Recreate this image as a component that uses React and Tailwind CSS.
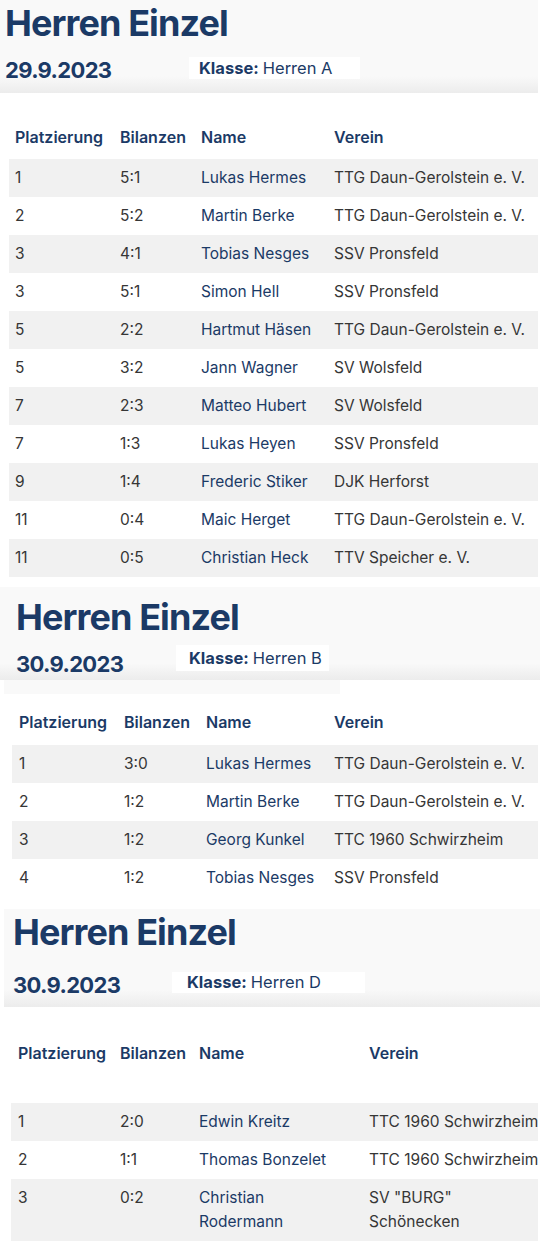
const NAVY = "text-[#1b3a66]";

const tableA = [
  ["1", "5:1", "Lukas Hermes", "TTG Daun-Gerolstein e. V."],
  ["2", "5:2", "Martin Berke", "TTG Daun-Gerolstein e. V."],
  ["3", "4:1", "Tobias Nesges", "SSV Pronsfeld"],
  ["3", "5:1", "Simon Hell", "SSV Pronsfeld"],
  ["5", "2:2", "Hartmut Häsen", "TTG Daun-Gerolstein e. V."],
  ["5", "3:2", "Jann Wagner", "SV Wolsfeld"],
  ["7", "2:3", "Matteo Hubert", "SV Wolsfeld"],
  ["7", "1:3", "Lukas Heyen", "SSV Pronsfeld"],
  ["9", "1:4", "Frederic Stiker", "DJK Herforst"],
  ["11", "0:4", "Maic Herget", "TTG Daun-Gerolstein e. V."],
  ["11", "0:5", "Christian Heck", "TTV Speicher e. V."],
];

const tableB = [
  ["1", "3:0", "Lukas Hermes", "TTG Daun-Gerolstein e. V."],
  ["2", "1:2", "Martin Berke", "TTG Daun-Gerolstein e. V."],
  ["3", "1:2", "Georg Kunkel", "TTC 1960 Schwirzheim"],
  ["4", "1:2", "Tobias Nesges", "SSV Pronsfeld"],
];

const tableD = [
  ["1", "2:0", ["Edwin Kreitz"], ["TTC 1960 Schwirzheim"]],
  ["2", "1:1", ["Thomas Bonzelet"], ["TTC 1960 Schwirzheim"]],
  ["3", "0:2", ["Christian", "Rodermann"], ['SV "BURG"', "Schönecken"]],
];

function Lines({ value }) {
  if (!Array.isArray(value)) return value;
  return value.map((line, i) => (
    <span key={i} className="block">
      {line}
    </span>
  ));
}

// grauer Kopfbereich mit Titel, Datum und weißer Klasse-Box
function Header({ date, klasse, className, dateRow, dateClass, boxClass }) {
  return (
    <div className={`bg-[linear-gradient(to_bottom,#f9f9f9_82%,#ececec)] ${className}`}>
      <h2 className={`text-[36px] font-bold leading-[44px] tracking-[-0.025em] ${NAVY}`}>
        Herren Einzel
      </h2>
      <div className={`flex items-start ${dateRow}`}>
        <span
          className={`text-[22px] font-bold leading-[22px] tracking-[-0.03em] ${NAVY} ${dateClass}`}
        >
          {date}
        </span>
        <div className={`flex items-center bg-white text-[16.5px] leading-none ${NAVY} ${boxClass}`}>
          <span className="font-bold">Klasse:</span>
          <span className="ml-1">{klasse}</span>
        </div>
      </div>
    </div>
  );
}

function Table({ rows, cols, pad, className, headClass }) {
  return (
    <div className={className}>
      <div className={`grid ${cols} ${pad} text-[16px] font-semibold leading-6 ${NAVY} ${headClass}`}>
        <span>Platzierung</span>
        <span>Bilanzen</span>
        <span>Name</span>
        <span>Verein</span>
      </div>
      {rows.map((r, i) => (
        <div
          key={i}
          className={`grid ${cols} ${pad} py-[7px] text-[15.5px] leading-6 whitespace-nowrap text-[#363636] ${
            i % 2 === 0 ? "bg-[#f1f1f1]" : "bg-white"
          }`}
        >
          <span>{r[0]}</span>
          <span>{r[1]}</span>
          <span className={NAVY}>
            <Lines value={r[2]} />
          </span>
          <span>
            <Lines value={r[3]} />
          </span>
        </div>
      ))}
    </div>
  );
}

export default function App() {
  return (
    <div className="w-[540px] overflow-hidden bg-white font-['Inter','Noto_Sans',sans-serif]">
      {/* Herren A */}
      <Header
        date="29.9.2023"
        klasse="Herren A"
        className="mr-[2px] h-[93px] pl-[5px] pt-[1px]"
        dateRow="mt-[12px]"
        dateClass="mt-[2px] w-[184px]"
        boxClass="h-[22px] w-[171px] pl-[10px]"
      />
      <Table
        rows={tableA}
        cols="grid-cols-[105px_81px_133px_1fr]"
        pad="pl-[6px]"
        className="ml-[9px] mr-[2px] mt-[32px]"
        headClass="pb-[10px]"
      />

      {/* Herren B */}
      <div className="mt-[10px]">
        <Header
          date="30.9.2023"
          klasse="Herren B"
          className="h-[93px] pl-[16px] pt-[8px]"
          dateRow="mt-[6px]"
          dateClass="mt-[8px] w-[160px]"
          boxClass="h-[26px] w-[153px] pl-[13px]"
        />
        <div className="ml-[4px] h-[14px] w-[336px] bg-[#f9f9f9]" />
      </div>
      <Table
        rows={tableB}
        cols="grid-cols-[105px_82px_128px_1fr]"
        pad="pl-[7px]"
        className="ml-[12px] mr-[2px] mt-[16px]"
        headClass="pb-[11px]"
      />

      {/* Herren D */}
      <Header
        date="30.9.2023"
        klasse="Herren D"
        className="ml-[4px] mt-[12px] h-[98px] pl-[9px] pt-[1px]"
        dateRow="mt-[18px]"
        dateClass="mt-[2px] w-[159px]"
        boxClass="h-[21px] w-[193px] pl-[15px]"
      />
      <Table
        rows={tableD}
        cols="grid-cols-[102px_79px_170px_1fr]"
        pad="pl-[7px]"
        className="ml-[11px] mr-[2px] mt-[34px]"
        headClass="pb-[38px]"
      />
    </div>
  );
}
